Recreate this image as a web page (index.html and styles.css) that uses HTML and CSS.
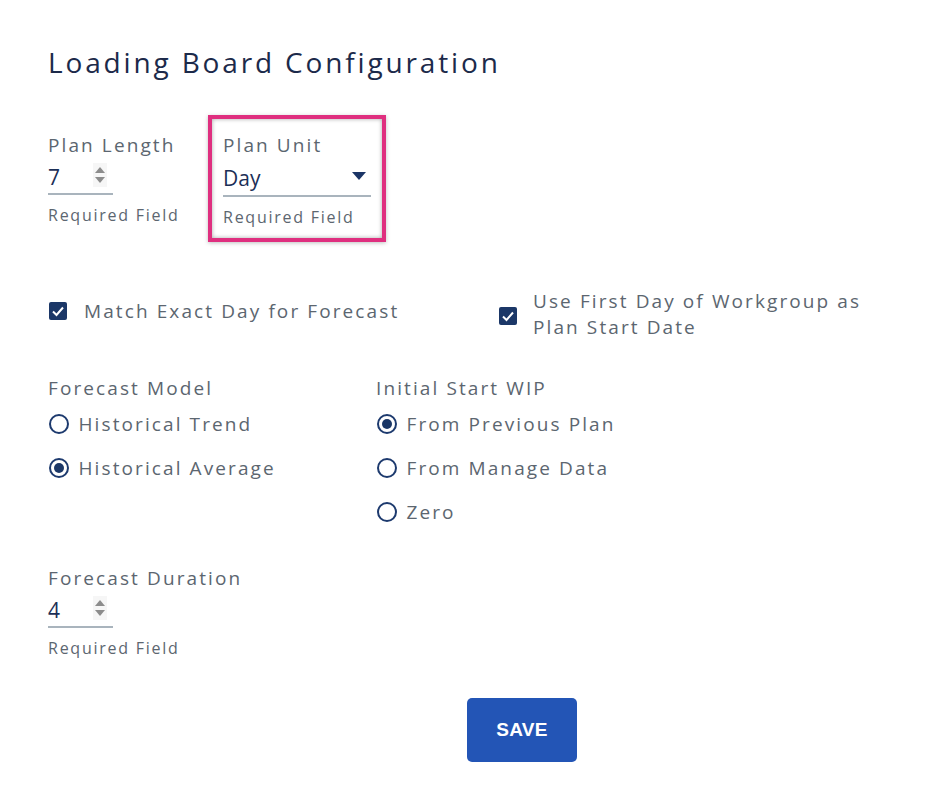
FILE: index.html
```html
<!DOCTYPE html>
<html>
<head>
<meta charset="utf-8">
<link rel="stylesheet" href="styles.css">
</head>
<body>
<div class="page">
  <h1 class="title">Loading Board Configuration</h1>

  <div class="row-fields">
    <div class="field field-length">
      <div class="label">Plan Length</div>
      <div class="input num">
        <span class="value">7</span>
        <span class="spin"><svg width="12" height="24" viewBox="0 0 12 24"><path d="M6 4 L11 10 L1 10 Z" fill="#8c8c8c"/><path d="M1 14 L11 14 L6 20 Z" fill="#8c8c8c"/></svg></span>
      </div>
      <div class="hint">Required Field</div>
    </div>
    <div class="field field-unit">
      <div class="label">Plan Unit</div>
      <div class="input select">
        <span class="value">Day</span>
        <svg class="caret" width="14" height="8" viewBox="0 0 14 8"><path d="M0 0 L14 0 L7 8 Z" fill="#1b3566"/></svg>
      </div>
      <div class="hint">Required Field</div>
    </div>
  </div>

  <div class="row-checks">
    <label class="check check-1">
      <span class="box"><svg width="18" height="18" viewBox="0 0 18 18"><path d="M4 9.5 L7.5 13 L14 5.5" stroke="#fff" stroke-width="2" fill="none"/></svg></span>
      <span class="check-text">Match Exact Day for Forecast</span>
    </label>
    <label class="check check-2">
      <span class="box"><svg width="18" height="18" viewBox="0 0 18 18"><path d="M4 9.5 L7.5 13 L14 5.5" stroke="#fff" stroke-width="2" fill="none"/></svg></span>
      <span class="check-text">Use First Day of Workgroup as<br>Plan Start Date</span>
    </label>
  </div>

  <div class="row-radios">
    <div class="group group-1">
      <div class="label">Forecast Model</div>
      <div class="radio"><span class="circle"></span><span class="radio-text">Historical Trend</span></div>
      <div class="radio"><span class="circle on"></span><span class="radio-text">Historical Average</span></div>
    </div>
    <div class="group group-2">
      <div class="label">Initial Start WIP</div>
      <div class="radio"><span class="circle on"></span><span class="radio-text">From Previous Plan</span></div>
      <div class="radio"><span class="circle"></span><span class="radio-text">From Manage Data</span></div>
      <div class="radio"><span class="circle"></span><span class="radio-text">Zero</span></div>
    </div>
  </div>

  <div class="field field-duration">
    <div class="label">Forecast Duration</div>
    <div class="input num">
      <span class="value">4</span>
      <span class="spin"><svg width="12" height="24" viewBox="0 0 12 24"><path d="M6 4 L11 10 L1 10 Z" fill="#8c8c8c"/><path d="M1 14 L11 14 L6 20 Z" fill="#8c8c8c"/></svg></span>
    </div>
    <div class="hint">Required Field</div>
  </div>

  <div class="actions">
    <button class="save">SAVE</button>
  </div>
</div>
</body>
</html>
```

FILE: styles.css
```css
html, body {
  margin: 0;
  padding: 0;
  background: #ffffff;
}
.page {
  padding: 44px 0 0 48px;
  font-family: "Open Sans", "Noto Sans", sans-serif;
  color: #5c6670;
}
.title {
  margin: 0;
  font-size: 28px;
  line-height: 36px;
  font-weight: 400;
  color: #1c2a4a;
  letter-spacing: 2.85px;
}
.label {
  font-size: 19px;
  line-height: 24px;
  color: #5c6670;
  letter-spacing: 2.1px;
}
.hint {
  margin-top: 10px;
  font-size: 16px;
  line-height: 20px;
  color: #5c6670;
  letter-spacing: 1.75px;
}
.row-fields {
  display: flex;
  margin-top: 35px;
}
.field-length {
  width: 160px;
  padding-top: 18px;
}
.field-unit {
  width: 148px;
  border: 4px solid #df2f7f;
  padding: 14px 11px 11px 11px;
  box-shadow: inset 0 0 4px rgba(0,0,0,0.35), 0 1px 4px rgba(0,0,0,0.25);
}
.input {
  display: flex;
  align-items: center;
  height: 36px;
  border-bottom: 2px solid #a9b4bd;
  font-size: 21px;
  color: #1c2f57;
}
.input .value {
  padding-top: 4px;
}
.num {
  width: 65px;
  justify-content: space-between;
}
.num .spin {
  display: flex;
  background: #f6f6f6;
  width: 14px;
  justify-content: center;
  margin-right: 6px;
}
.select {
  justify-content: space-between;
  height: 38px;
}
.select .caret {
  margin-right: 5px;
}
.row-checks {
  display: flex;
  align-items: center;
  margin-top: 46px;
}
.check {
  display: flex;
  align-items: center;
}
.check-1 {
  width: 450px;
  margin-top: -6px;
}
.box {
  width: 18px;
  height: 18px;
  background: #1b3767;
  border-radius: 2px;
  flex: none;
  display: flex;
  margin-left: 1px;
}
.check-1 .box {
  margin-right: 17px;
}
.check-2 .box {
  margin-right: 16px;
  margin-top: 4px;
}
.check-text {
  font-size: 19px;
  line-height: 26px;
  color: #5c6670;
  letter-spacing: 2.1px;
}
.row-radios {
  display: flex;
  margin-top: 36px;
}
.group-1 {
  width: 328px;
}
.radio {
  display: flex;
  align-items: center;
  margin-top: 8px;
  height: 32px;
}
.radio + .radio {
  margin-top: 12px;
}
.circle {
  width: 16px;
  height: 16px;
  border: 2.5px solid #1d3a6e;
  border-radius: 50%;
  margin-left: 0.5px;
  margin-right: 10px;
  flex: none;
  display: flex;
  align-items: center;
  justify-content: center;
}
.circle.on::after {
  content: "";
  width: 10px;
  height: 10px;
  border-radius: 50%;
  background: #1b3767;
}
.radio-text {
  font-size: 19px;
  line-height: 24px;
  color: #5c6670;
  letter-spacing: 2.1px;
}
.field-duration {
  margin-top: 38px;
}
.actions {
  display: flex;
  padding-left: 419px;
  margin-top: 40px;
}
.save {
  width: 110px;
  height: 64px;
  background: #2355b6;
  color: #ffffff;
  border: none;
  border-radius: 5px;
  font-family: "Liberation Sans", Arial, sans-serif;
  font-weight: 700;
  font-size: 19px;
  letter-spacing: 0.3px;
  padding: 0;
}
```
